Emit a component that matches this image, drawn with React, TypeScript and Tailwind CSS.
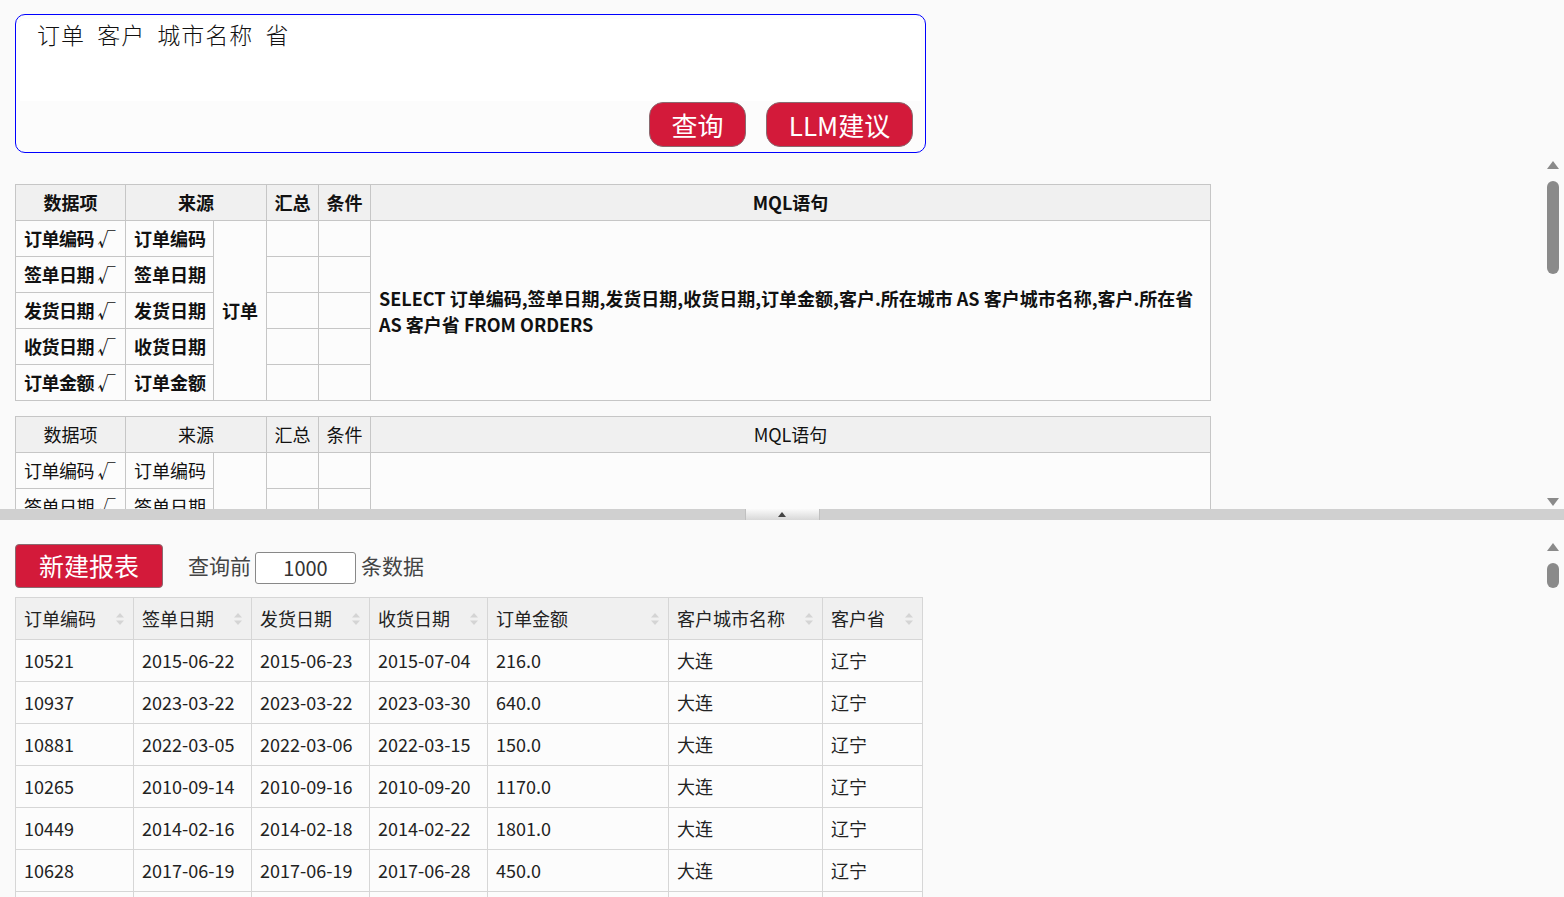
import React from 'react'

const font = { fontFamily: "'Noto Sans CJK SC', 'Noto Sans', sans-serif" }

const fields = ['订单编码', '签单日期', '发货日期', '收货日期', '订单金额']

const rows = [
  ['10521', '2015-06-22', '2015-06-23', '2015-07-04', '216.0', '大连', '辽宁'],
  ['10937', '2023-03-22', '2023-03-22', '2023-03-30', '640.0', '大连', '辽宁'],
  ['10881', '2022-03-05', '2022-03-06', '2022-03-15', '150.0', '大连', '辽宁'],
  ['10265', '2010-09-14', '2010-09-16', '2010-09-20', '1170.0', '大连', '辽宁'],
  ['10449', '2014-02-16', '2014-02-18', '2014-02-22', '1801.0', '大连', '辽宁'],
  ['10628', '2017-06-19', '2017-06-19', '2017-06-28', '450.0', '大连', '辽宁'],
  ['10716', '2018-11-02', '2018-11-03', '2018-11-10', '320.0', '大连', '辽宁'],
]

const cols = [
  { label: '订单编码', w: 'w-[118px]' },
  { label: '签单日期', w: 'w-[118px]' },
  { label: '发货日期', w: 'w-[118px]' },
  { label: '收货日期', w: 'w-[118px]' },
  { label: '订单金额', w: 'w-[181px]' },
  { label: '客户城市名称', w: 'w-[154px]' },
  { label: '客户省', w: 'w-[100px]' },
]

function SortIcon() {
  return (
    <svg width="10" height="16" viewBox="0 0 10 16" className="shrink-0">
      <path d="M5 2 L9 6.5 H1 Z" fill="#d4d4d4" />
      <path d="M5 14 L9 9.5 H1 Z" fill="#d4d4d4" />
    </svg>
  )
}

function ScrollBar({ thumbTop, thumbH, height }: { thumbTop: number; thumbH: number; height: number }) {
  return (
    <div className="relative w-[17px] shrink-0" style={{ height }}>
      <svg width="14" height="10" viewBox="0 0 14 10" className="absolute left-[1px] top-0">
        <path d="M7 1 L13 9 H1 Z" fill="#8a8a8a" />
      </svg>
      <div
        className="absolute left-[2px] w-[12px] rounded-full bg-[#8a8a8a]"
        style={{ top: thumbTop, height: thumbH }}
      />
    </div>
  )
}

function QueryTable({ bold }: { bold: boolean }) {
  const weight = bold ? 'font-bold' : 'font-normal'
  return (
    <table className={`border-collapse w-[1196px] text-[18px] text-[#111] ${weight}`} style={font}>
      <thead>
        <tr className="h-[36px] bg-[#f0f0f0]">
          <th className={`border border-[#c6c6c6] w-[110px] ${weight}`}>数据项</th>
          <th colSpan={2} className={`border border-[#c6c6c6] w-[140px] ${weight}`}>来源</th>
          <th className={`border border-[#c6c6c6] w-[52px] ${weight}`}>汇总</th>
          <th className={`border border-[#c6c6c6] w-[52px] ${weight}`}>条件</th>
          <th className={`border border-[#c6c6c6] ${weight}`}>MQL语句</th>
        </tr>
      </thead>
      <tbody className="bg-[#fcfcfc]">
        {fields.map((f, i) => (
          <tr key={f} className="h-[36px]">
            <td className="border border-[#c6c6c6] px-2 whitespace-nowrap tracking-[-0.5px]">{f} √</td>
            <td className="border border-[#c6c6c6] pl-2 w-[88px] whitespace-nowrap">{f}</td>
            {i === 0 && (
              <td rowSpan={5} className="border border-[#c6c6c6] px-2 w-[52px] whitespace-nowrap">
                订单
              </td>
            )}
            <td className="border border-[#c6c6c6]" />
            <td className="border border-[#c6c6c6]" />
            {i === 0 && (
              <td rowSpan={5} className="border border-[#c6c6c6] px-2 leading-[26px]">
                SELECT 订单编码,签单日期,发货日期,收货日期,订单金额,客户.所在城市 AS 客户城市名称,客户.所在省 AS 客户省 FROM ORDERS
              </td>
            )}
          </tr>
        ))}
      </tbody>
    </table>
  )
}

export default function App() {
  return (
    <div className="w-[1564px] h-[897px] overflow-hidden bg-[#fafafa] flex flex-col" style={font}>
      {/* top panel */}
      <div className="h-[509px] shrink-0 flex overflow-hidden">
        <div className="flex-1 pl-[15px] pt-[14px] flex flex-col gap-[31px]">
          <div className="shrink-0 w-[911px] h-[139px] rounded-[10px] border border-[#0000ff] bg-[#fcfcfc] flex flex-col px-[4px] pt-[4px]">
            <div
              className="h-[82px] shrink-0 bg-white rounded-t-[4px] pl-[17px] leading-[30px] text-[23px] text-[#111] tracking-[1px]"
              style={{ fontFamily: "'Noto Sans CJK SC', serif", fontWeight: 300 }}
            >
              订单&nbsp;&nbsp;客户&nbsp;&nbsp;城市名称&nbsp;&nbsp;省
            </div>
            <div className="flex justify-end gap-[20px] pr-[8px] pt-[1px]">
              <button className="w-[97px] h-[45px] rounded-[14px] bg-[#d31a3a] border border-[#8a6a70] text-white text-[26px] leading-none">
                查询
              </button>
              <button className="w-[147px] h-[45px] rounded-[14px] bg-[#d31a3a] border border-[#8a6a70] text-white text-[26px] leading-none">
                LLM建议
              </button>
            </div>
          </div>
          <div className="flex flex-col gap-[15px] shrink-0">
            <QueryTable bold />
            <QueryTable bold={false} />
          </div>
        </div>
        <div className="pt-[160px] pr-[2px]">
          <ScrollBar thumbTop={21} thumbH={93} height={337} />
          <svg width="14" height="10" viewBox="0 0 14 10" className="ml-[1px]">
            <path d="M7 9 L13 1 H1 Z" fill="#8a8a8a" />
          </svg>
        </div>
      </div>

      {/* divider */}
      <div className="h-[11px] bg-[#d0d0d0] flex justify-center shrink-0">
        <div className="w-[75px] h-[11px] bg-gradient-to-b from-[#fafafa] to-[#d8d8d8] border-x border-[#c0c0c0] flex items-center justify-center">
          <svg width="8" height="5" viewBox="0 0 8 5">
            <path d="M4 0 L8 5 H0 Z" fill="#444" />
          </svg>
        </div>
      </div>

      {/* bottom panel */}
      <div className="flex-1 flex overflow-hidden">
        <div className="flex-1 pl-[15px] pt-[24px]">
          <div className="flex items-center h-[44px]">
            <button className="w-[148px] h-[44px] rounded-[4px] bg-[#d31a3a] border border-[#8a6a70] text-white text-[25px]">
              新建报表
            </button>
            <span className="ml-[25px] text-[21px] text-[#444]">查询前</span>
            <div className="ml-[4px] mt-[4px] w-[101px] h-[32px] border border-[#888] rounded-[3px] bg-white flex items-center justify-center text-[20px] text-[#333]">
              1000
            </div>
            <span className="ml-[5px] text-[21px] text-[#444]">条数据</span>
          </div>
          <table className="mt-[9px] border-collapse text-[18px] text-[#222]">
            <thead>
              <tr className="h-[42px] bg-[#f0f0f0]">
                {cols.map((c) => (
                  <th key={c.label} className={`border border-[#d6d6d6] font-normal ${c.w} px-2`}>
                    <div className="flex items-center justify-between">
                      <span>{c.label}</span>
                      <SortIcon />
                    </div>
                  </th>
                ))}
              </tr>
            </thead>
            <tbody className="bg-[#fcfcfc]">
              {rows.map((r) => (
                <tr key={r[0]} className="h-[42px]">
                  {r.map((v, j) => (
                    <td key={j} className="border border-[#d6d6d6] px-2">
                      {v}
                    </td>
                  ))}
                </tr>
              ))}
            </tbody>
          </table>
        </div>
        <div className="pt-[22px] pr-[2px]">
          <ScrollBar thumbTop={21} thumbH={25} height={60} />
        </div>
      </div>
    </div>
  )
}
